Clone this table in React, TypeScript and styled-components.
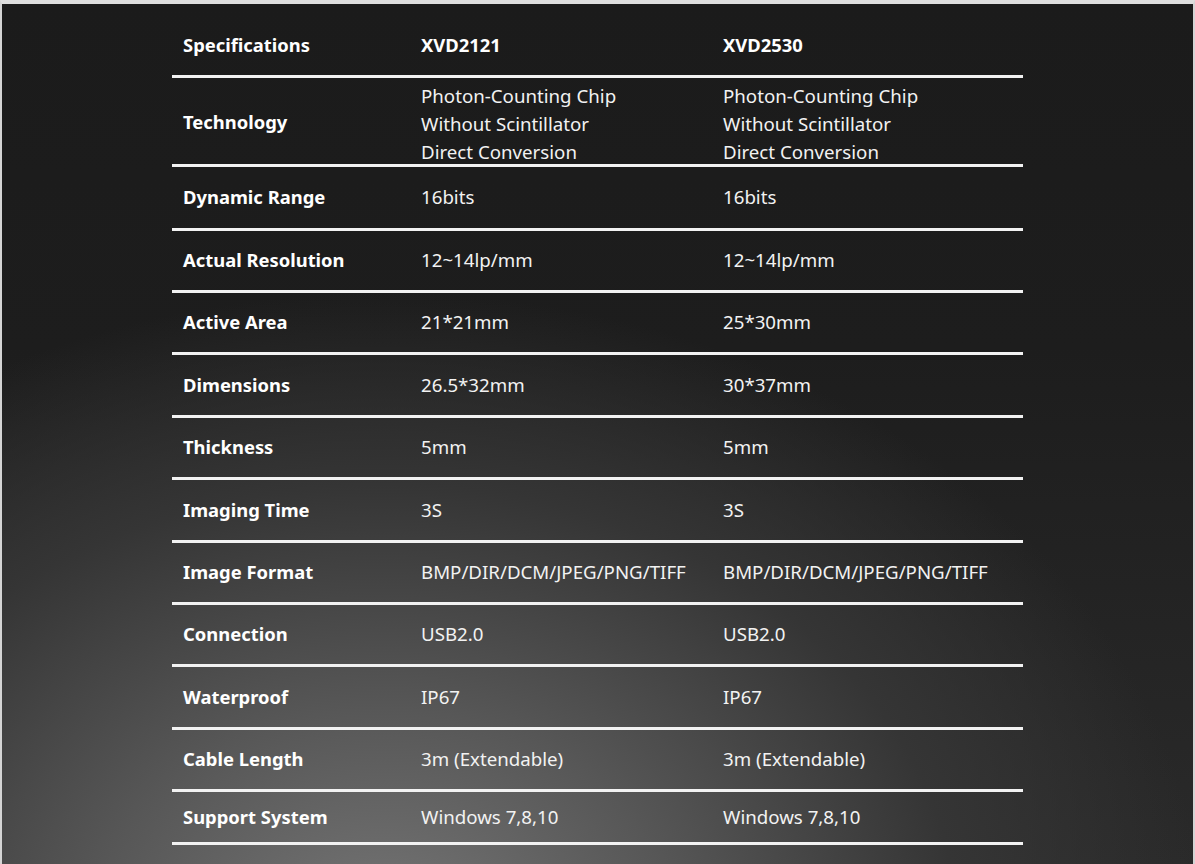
import { createGlobalStyle, styled } from "styled-components";

const GlobalStyle = createGlobalStyle`
  html, body {
    margin: 0;
    padding: 0;
  }
  body {
    background: #1c1c1c;
    font-family: "Noto Sans", "Open Sans", sans-serif;
  }
`;

type Spec = { label: string; a: string[]; b: string[]; h: number };

const specs: Spec[] = [
  {
    label: "Technology",
    a: ["Photon-Counting Chip", "Without Scintillator", "Direct Conversion"],
    b: ["Photon-Counting Chip", "Without Scintillator", "Direct Conversion"],
    h: 89,
  },
  { label: "Dynamic Range", a: ["16bits"], b: ["16bits"], h: 64 },
  { label: "Actual Resolution", a: ["12~14lp/mm"], b: ["12~14lp/mm"], h: 62 },
  { label: "Active Area", a: ["21*21mm"], b: ["25*30mm"], h: 62 },
  { label: "Dimensions", a: ["26.5*32mm"], b: ["30*37mm"], h: 63 },
  { label: "Thickness", a: ["5mm"], b: ["5mm"], h: 62 },
  { label: "Imaging Time", a: ["3S"], b: ["3S"], h: 63 },
  { label: "Image Format", a: ["BMP/DIR/DCM/JPEG/PNG/TIFF"], b: ["BMP/DIR/DCM/JPEG/PNG/TIFF"], h: 62 },
  { label: "Connection", a: ["USB2.0"], b: ["USB2.0"], h: 62 },
  { label: "Waterproof", a: ["IP67"], b: ["IP67"], h: 63 },
  { label: "Cable Length", a: ["3m (Extendable)"], b: ["3m (Extendable)"], h: 62 },
  { label: "Support System", a: ["Windows 7,8,10"], b: ["Windows 7,8,10"], h: 53 },
];

export default function App() {
  return (
    <>
      <GlobalStyle />
      <Frame>
        <Table>
          <HeadRow>
            <Label>Specifications</Label>
            <HeadCell>XVD2121</HeadCell>
            <HeadCell>XVD2530</HeadCell>
          </HeadRow>
          {specs.map((s) => {
            const multi = s.a.length > 1;
            return (
              <Row key={s.label} $h={s.h}>
                <Label>{s.label}</Label>
                <Value $multi={multi}>
                  {s.a.map((line) => (
                    <div key={line}>{line}</div>
                  ))}
                </Value>
                <Value $multi={multi}>
                  {s.b.map((line) => (
                    <div key={line}>{line}</div>
                  ))}
                </Value>
              </Row>
            );
          })}
        </Table>
      </Frame>
    </>
  );
}

const Frame = styled.div`
  width: 1195px;
  height: 864px;
  box-sizing: border-box;
  overflow: hidden;
  border-top: 4px solid #dedede;
  border-left: 2px solid #d4d4d4;
  border-right: 2px solid #d4d4d4;
  padding-left: 170px;
  background:
    radial-gradient(ellipse 820px 640px at 32% 108%, #767676 0%, #575757 35%, #353535 70%, rgba(28, 28, 28, 0) 100%),
    linear-gradient(180deg, #1b1b1b 0%, #1d1d1d 40%, #2a2a2a 100%);
`;

const Table = styled.div`
  width: 851px;
  display: flex;
  flex-direction: column;
`;

const Row = styled.div<{ $h: number }>`
  display: grid;
  grid-template-columns: 249px 302px 1fr;
  align-items: center;
  height: ${(p) => p.$h}px;
  box-sizing: border-box;
  border-bottom: 3px solid #f2f2f2;
  color: #f4f4f4;
`;

const HeadRow = styled(Row).attrs({ $h: 74 })`
  align-items: end;
  padding-bottom: 18px;
`;

const Label = styled.div`
  padding-left: 11px;
  margin-top: -1px;
  font-size: 18.4px;
  font-weight: 700;
  line-height: 24px;
  color: #ffffff;
  white-space: nowrap;
`;

const HeadCell = styled.div`
  font-size: 18.4px;
  font-weight: 700;
  line-height: 24px;
  color: #ffffff;
`;

const Value = styled.div<{ $multi: boolean }>`
  margin-top: ${(p) => (p.$multi ? 4 : -1)}px;
  font-size: 18.7px;
  font-weight: 400;
  line-height: 28px;
  color: #f2f2f2;
  white-space: nowrap;
`;
